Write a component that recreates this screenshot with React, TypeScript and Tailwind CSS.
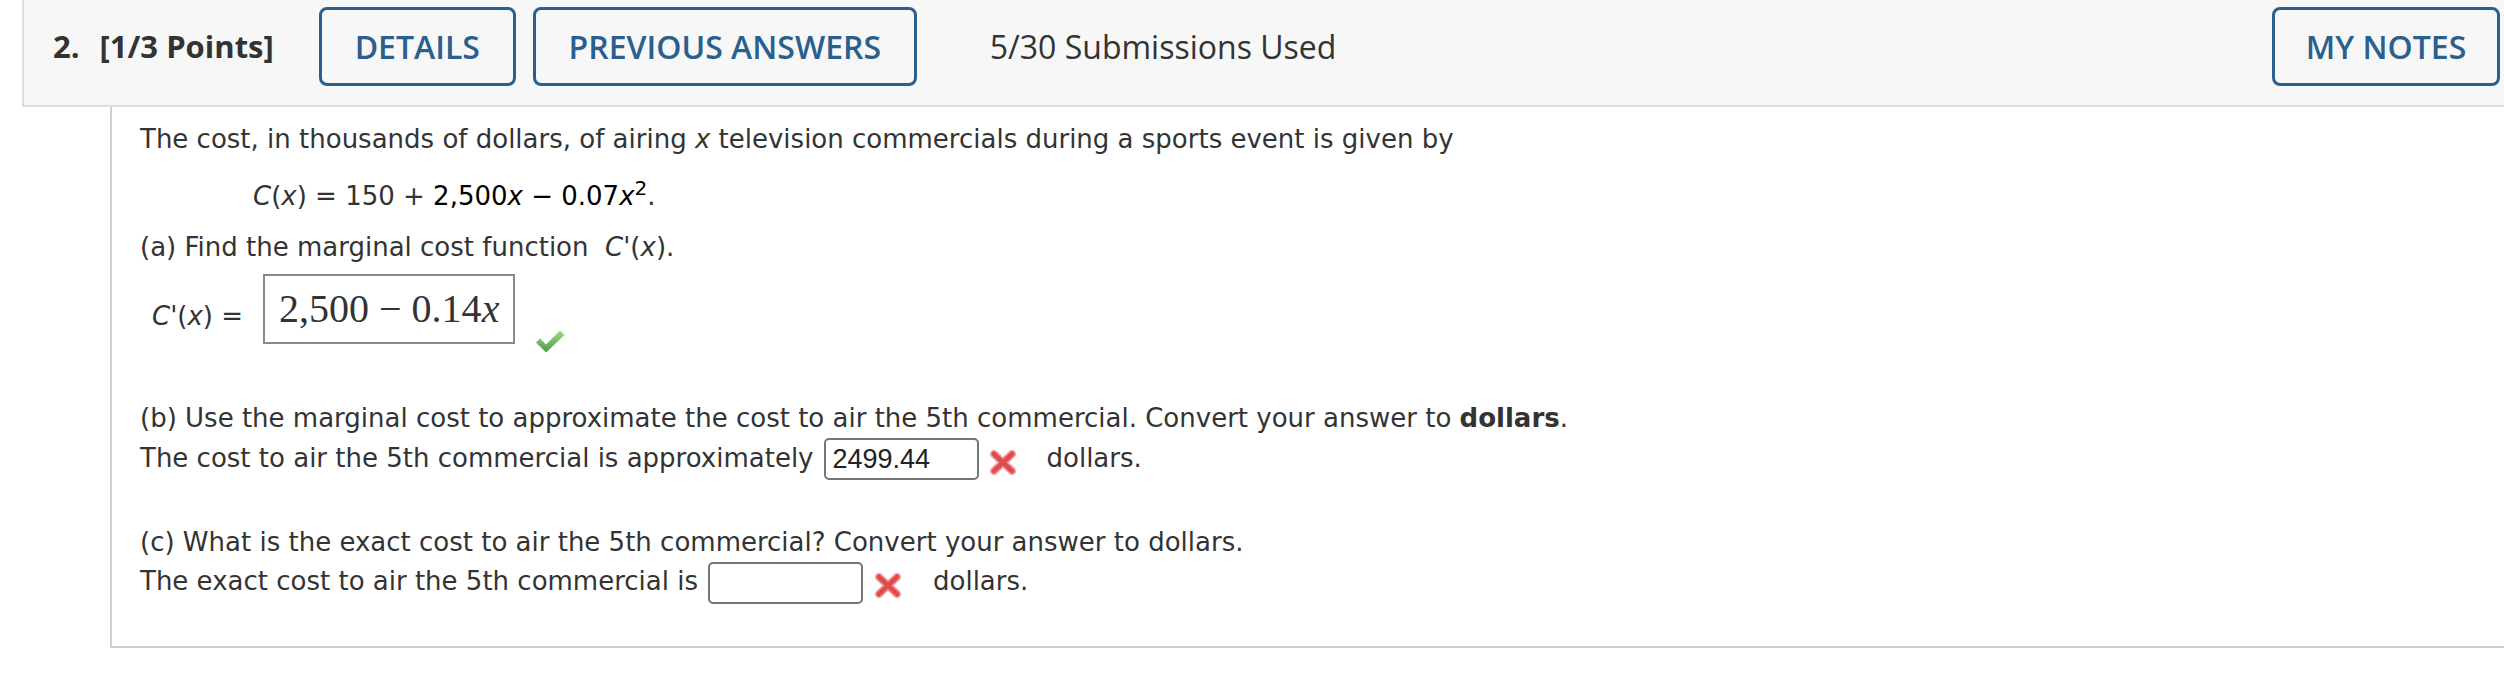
import React from 'react'

function CheckIcon() {
  return (
    <svg width="30" height="23" viewBox="0 0 30 23">
      <defs>
        <linearGradient id="chk" x1="0" y1="0" x2="0" y2="1">
          <stop offset="0" stopColor="#a2dc8f" />
          <stop offset="1" stopColor="#4b983d" />
        </linearGradient>
      </defs>
      <path d="M1 12.5 L5 8.5 L11 14.5 L25 0.5 L29.5 5 L11 22.5 Z" fill="url(#chk)" />
    </svg>
  )
}

function CrossIcon() {
  return (
    <svg width="28" height="25" viewBox="0 0 28 25">
      <g strokeLinecap="round">
        <line x1="5" y1="4" x2="23" y2="21" stroke="#f4a3a3" strokeWidth="8" />
        <line x1="23" y1="4" x2="5" y2="21" stroke="#f4a3a3" strokeWidth="8" />
        <line x1="5" y1="4" x2="23" y2="21" stroke="#e04c4c" strokeWidth="5" />
        <line x1="23" y1="4" x2="5" y2="21" stroke="#e04c4c" strokeWidth="5" />
      </g>
    </svg>
  )
}

function AnswerInput({ value }: { value?: string }) {
  return (
    <div className="flex h-[42px] w-[155px] items-center rounded-[5px] border-2 border-[#767676] bg-white pl-[7px] font-['Liberation_Sans',Arial,sans-serif] text-[27px] text-[#222]">
      {value}
    </div>
  )
}

export default function App() {
  return (
    <div className="h-[677px] w-[2504px] overflow-hidden bg-white">
      {/* question header */}
      <div className="ml-[22px] flex items-center border-b-2 border-l-2 border-[#dedede] bg-[#f7f7f7] pb-[19px] pl-[29px] pr-[4px] pt-[7px] font-['Open_Sans',sans-serif] text-[32px]">
        <div className="text-[31px] font-bold text-[#333]">
          <span>2.</span>
          <span className="ml-[20px]">[1/3 Points]</span>
        </div>
        <button className="ml-[45px] flex h-[79px] w-[197px] items-center justify-center rounded-[8px] border-[3px] border-[#2b5f8e] font-semibold text-[#2b5f8e]">
          DETAILS
        </button>
        <button className="ml-[17px] flex h-[79px] w-[384px] items-center justify-center rounded-[8px] border-[3px] border-[#2b5f8e] font-semibold text-[#2b5f8e]">
          PREVIOUS ANSWERS
        </button>
        <span className="ml-[73px] text-[#333]">5/30 Submissions Used</span>
        <button className="ml-auto flex h-[79px] w-[228px] items-center justify-center rounded-[8px] border-[3px] border-[#2b5f8e] font-semibold text-[#2b5f8e]">
          MY NOTES
        </button>
      </div>

      {/* question body */}
      <div className="ml-[110px] border-b-2 border-l-2 border-[#cfcfcf] pb-[42px] pl-[28px] pt-[16px] font-['DejaVu_Sans',Verdana,sans-serif] text-[26px] leading-[32px] text-[#333]">
        <p className="h-[32px]">
          The cost, in thousands of dollars, of airing <i>x</i> television commercials during a sports event is given by
        </p>
        <p className="mt-[25px] h-[32px] pl-[113px]">
          <i>C</i>(<i>x</i>) = 150 + <span className="text-black">2,500<i>x</i> − 0.07<i>x</i><sup className="text-[20px]">2</sup></span>.
        </p>
        <p className="mt-[19px] h-[32px]">
          (a) Find the marginal cost function&nbsp; <i>C'</i>(<i>x</i>).
        </p>
        <div className="mt-[11px] flex items-start">
          <span className="ml-[12px] mt-[26px]">
            <i>C'</i>(<i>x</i>) =
          </span>
          <div className="ml-[20px] flex h-[70px] w-[252px] items-center border-2 border-[#8a8a8a] pl-[14px] font-['Liberation_Serif',serif] text-[40px] text-[#333]">
            2,500 − 0.14<i>x</i>
          </div>
          <div className="ml-[20px] mt-[56px]">
            <CheckIcon />
          </div>
        </div>

        <p className="mt-[49px] h-[32px]">
          (b) Use the marginal cost to approximate the cost to air the 5th commercial. Convert your answer to <b>dollars</b>.
        </p>
        <div className="mt-[4px] flex items-start">
          <span className="mt-[4px]">The cost to air the 5th commercial is approximately</span>
          <div className="ml-[10px]">
            <AnswerInput value="2499.44" />
          </div>
          <div className="ml-[10px] mt-[12px]">
            <CrossIcon />
          </div>
          <span className="ml-[30px] mt-[4px]">dollars.</span>
        </div>

        <p className="mt-[46px] h-[32px]">
          (c) What is the exact cost to air the 5th commercial? Convert your answer to dollars.
        </p>
        <div className="mt-[4px] flex items-start">
          <span className="mt-[3px]">The exact cost to air the 5th commercial is</span>
          <div className="ml-[10px]">
            <AnswerInput />
          </div>
          <div className="ml-[11px] mt-[11px]">
            <CrossIcon />
          </div>
          <span className="ml-[31px] mt-[3px]">dollars.</span>
        </div>
      </div>
    </div>
  )
}
